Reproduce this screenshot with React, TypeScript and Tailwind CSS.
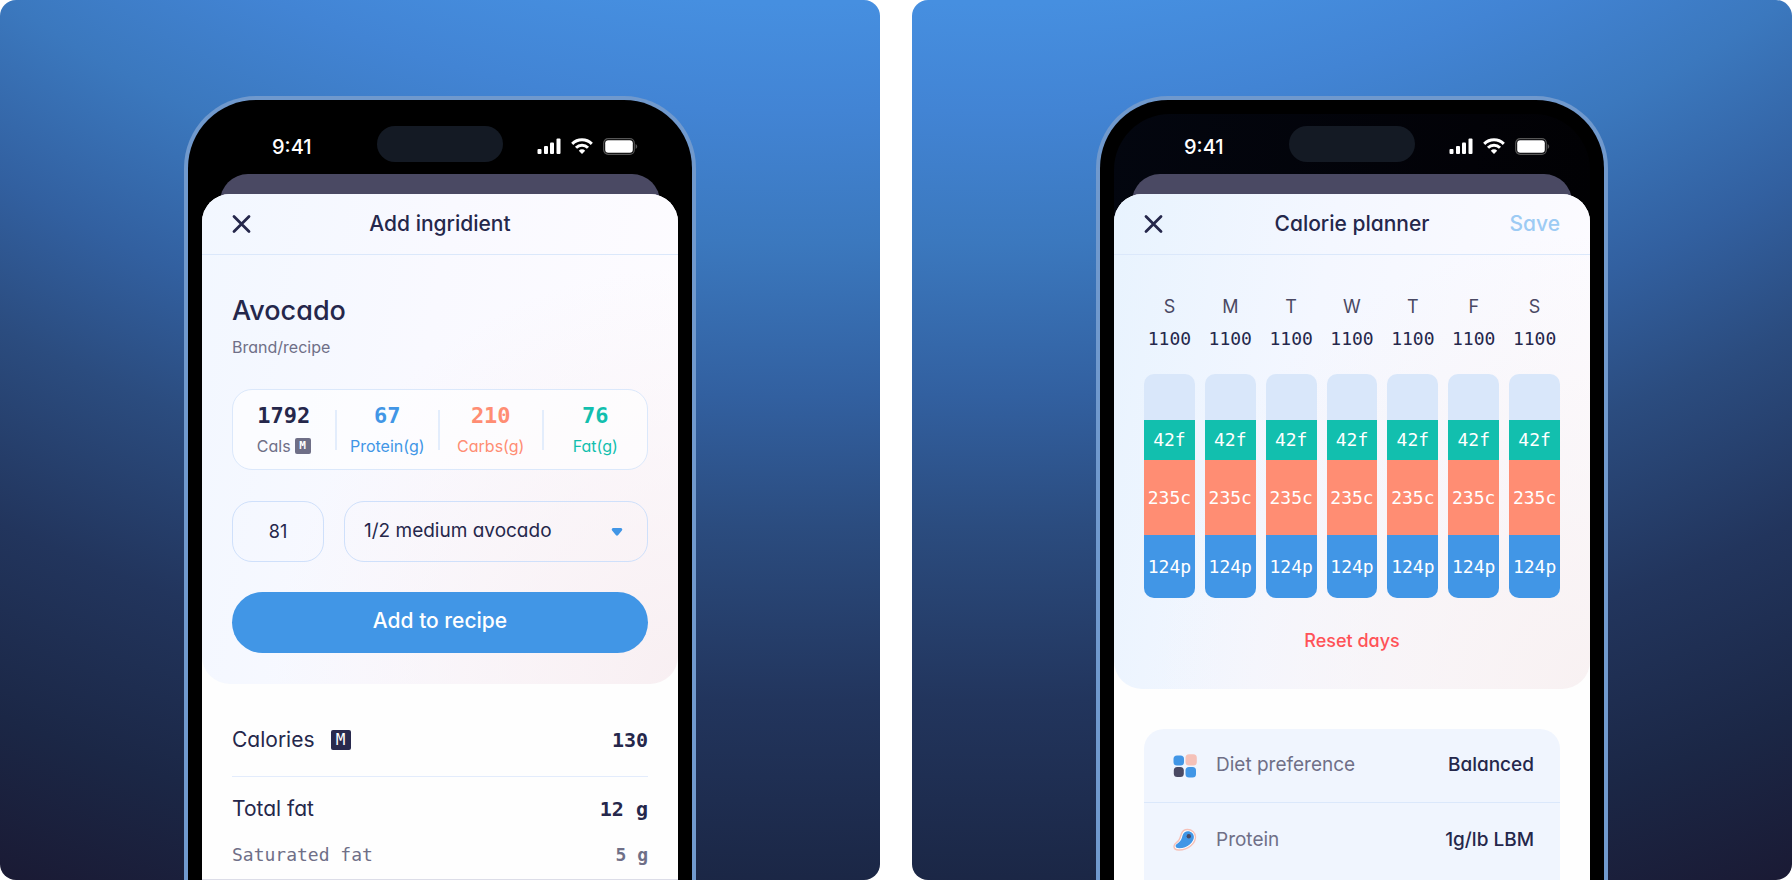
import { ReactNode, useState } from "react";
import clsx from "clsx";

const days = ["S", "M", "T", "W", "T", "F", "S"];

const macros = [
  { value: "1792", label: "Cals", color: "text-[#25274b]", labelColor: "text-[#6f6f87]", badge: true },
  { value: "67", label: "Protein(g)", color: "text-[#4196e6]", labelColor: "text-[#4196e6]" },
  { value: "210", label: "Carbs(g)", color: "text-[#ff8d73]", labelColor: "text-[#ff8d73]" },
  { value: "76", label: "Fat(g)", color: "text-[#12bfae]", labelColor: "text-[#12bfae]" },
];

export default function App() {
  return (
    <div className="grid h-screen grid-cols-2 gap-8 overflow-hidden bg-white font-['Inter',sans-serif] text-[#25274b] [font-feature-settings:'cv11']">
      <section className="flex justify-center overflow-hidden rounded-2xl bg-[radial-gradient(circle_farthest-corner_at_90%_-131%,#468fe0_53%,#4284d4_58%,#3b78be_64%,#3260a0_71%,#2b4c7f_77%,#22355d_85%,#1b2746_93%,#1a1a34_100%)] pt-24">
        <Phone>
          <IngredientSheet />
        </Phone>
      </section>
      <section className="flex justify-center overflow-hidden rounded-2xl bg-[radial-gradient(circle_farthest-corner_at_10%_-131%,#468fe0_53%,#4284d4_58%,#3b78be_64%,#3260a0_71%,#2b4c7f_77%,#22355d_85%,#1b2746_93%,#1a1a34_100%)] pt-24">
        <Phone tinted>
          <PlannerSheet />
        </Phone>
      </section>
    </div>
  );
}

function Phone({ children, tinted }: { children: ReactNode; tinted?: boolean }) {
  return (
    <div className="flex w-full max-w-[512px] flex-col rounded-t-[72px] border-4 border-b-0 border-[#7099cd] bg-black px-[14px] pt-[14px]">
      <div
        className={clsx(
          "flex flex-1 flex-col rounded-t-[56px]",
          tinted && "bg-[linear-gradient(100deg,#03060f_0%,#020207_60%,#000_100%)]"
        )}
      >
        <StatusBar />
        {/* sheet underneath, mostly covered */}
        <div className="mx-[18px] mt-3 -mb-3 h-8 shrink-0 rounded-t-[28px] bg-[#4a4963]" />
        {children}
      </div>
    </div>
  );
}

function StatusBar() {
  return (
    <div className="grid h-12 shrink-0 grid-cols-[1fr_126px_1fr] items-end">
      <span className="pb-[3px] pl-[70px] text-xl leading-6 font-medium text-white">
        9:41
      </span>
      <div className="h-9 rounded-full bg-[#141a24]" />
      <div className="flex items-center gap-[10px] pb-[7px] pl-[34px]">
        <svg width="24" height="17" viewBox="0 0 24 17" fill="#fff" aria-hidden="true">
          <rect x="0.5" y="11" width="4" height="5" rx="1" />
          <rect x="7" y="8" width="4" height="8" rx="1" />
          <rect x="13" y="4.5" width="4" height="11.5" rx="1" />
          <rect x="19.5" y="0.5" width="4" height="15.5" rx="1" />
        </svg>
        <svg width="22" height="17" viewBox="0 0 22 17" fill="none" stroke="#fff" strokeWidth="3" aria-hidden="true">
          <path d="M1.200 5.900a13.900 13.900 0 0 1 19.600 0" />
          <path d="M5 9.700a8.500 8.500 0 0 1 12 0" />
          <path d="M11 16l-3.200-3.300a4.500 4.500 0 0 1 6.400 0z" fill="#fff" stroke="none" />
        </svg>
        <svg width="35" height="17" viewBox="0 0 35 17" fill="none" aria-hidden="true">
          <rect x="0.700" y="0.700" width="30.600" height="15.600" rx="4.500" stroke="#555" strokeWidth="1.200" />
          <rect x="2.200" y="2.200" width="27.600" height="12.600" rx="3" fill="#fff" />
          <path d="M32.600 6v5c1-.4 1.600-1.400 1.600-2.500S33.600 6.400 32.600 6z" fill="#555" />
        </svg>
      </div>
    </div>
  );
}

function SheetHeader({ title, action }: { title: string; action?: string }) {
  return (
    <header className="grid h-[61px] grid-cols-[1fr_auto_1fr] items-center border-b border-[#dbe8fb] px-[30px]">
      <button aria-label="Close" className="cursor-pointer justify-self-start">
        <svg width="20" height="20" viewBox="0 0 20 20" stroke="#25274b" strokeWidth="2.800" strokeLinecap="round">
          <path d="M2 2.500l15 15M17 2.500l-15 15" />
        </svg>
      </button>
      <h1 className="text-[21px] font-medium">{title}</h1>
      {action && (
        <button className="cursor-pointer justify-self-end text-[21px] font-medium text-[#9dcbf4]">
          {action}
        </button>
      )}
    </header>
  );
}

function IngredientSheet() {
  const [amount, setAmount] = useState("81");

  return (
    <main className="flex-1 overflow-hidden rounded-t-[28px] bg-[#fefefe]">
      <div className="rounded-b-[28px] bg-[radial-gradient(ellipse_at_100%_100%,#f8eff2_0%,#f8eff200_60%),linear-gradient(100deg,#f2f7ff_0%,#f9f9ff_45%,#fefcff_100%)]">
        <SheetHeader title="Add ingridient" />

        <div className="px-[30px] pt-10 pb-[31px]">
          <h2 className="text-[27px] leading-8 font-medium">Avocado</h2>
          <p className="mt-2 text-base leading-6 text-[#6f6f87]">Brand/recipe</p>

          {/* MACROS */}
          <div className="mt-[30px] grid h-[81px] grid-cols-4 items-center divide-x-2 divide-[#e3edfc] rounded-[20px] border border-[#dbe8fb] bg-white/60">
            {macros.map((macro) => (
              <div key={macro.label} className="flex h-10 flex-col items-center justify-center">
                <span
                  className={clsx(
                    "pt-1 font-['DejaVu_Sans_Mono',monospace] text-[22px] leading-7 font-bold",
                    macro.color
                  )}
                >
                  {macro.value}
                </span>
                <span className={clsx("flex items-center gap-1 text-base leading-8", macro.labelColor)}>
                  {macro.label}
                  {macro.badge && (
                    <span className="flex size-4 items-center justify-center rounded-xs bg-[#6f6f87] font-['DejaVu_Sans_Mono',monospace] text-[11px] font-bold text-white">
                      M
                    </span>
                  )}
                </span>
              </div>
            ))}
          </div>

          {/* AMOUNT */}
          <div className="mt-[31px] flex gap-5">
            <input
              aria-label="Amount"
              value={amount}
              onChange={(e) => setAmount(e.target.value)}
              className="h-[61px] w-[92px] rounded-[20px] border border-[#cfe0fb] bg-transparent text-center text-lg outline-none"
            />
            <div className="relative flex-1">
              <select
                aria-label="Serving"
                className="h-[61px] w-full appearance-none rounded-[20px] border border-[#cfe0fb] bg-transparent px-[19px] text-[19px] outline-none"
              >
                <option>1/2 medium avocado</option>
                <option>1 medium avocado</option>
              </select>
              <svg
                width="12"
                height="10"
                viewBox="0 0 12 10"
                fill="#4196e6"
                aria-hidden="true"
                className="pointer-events-none absolute top-1/2 right-[25px] -translate-y-1/2"
              >
                <path d="M2.200 1h7.600a1.500 1.500 0 0 1 1.100 2.500L7.200 8a1.600 1.600 0 0 1-2.400 0L1.100 3.500A1.500 1.500 0 0 1 2.200 1z" />
              </svg>
            </div>
          </div>

          <button className="mt-[30px] h-[61px] w-full cursor-pointer rounded-full bg-[#4196e6] pb-1 text-[21px] font-medium text-white">
            Add to recipe
          </button>
        </div>
      </div>

      {/* NUTRITION */}
      <dl className="px-[30px] pt-10 text-[21px] leading-8">
        <div className="flex items-center justify-between border-b border-[#e3ecfc] pb-5">
          <dt className="flex items-center gap-4">
            Calories
            <span className="flex size-5 items-center justify-center rounded-xs bg-[#292a4e] font-['DejaVu_Sans_Mono',monospace] text-base text-white">
              M
            </span>
          </dt>
          <dd className="font-['DejaVu_Sans_Mono',monospace] text-xl leading-8 font-bold">130</dd>
        </div>
        <div className="flex items-center justify-between pt-4">
          <dt>Total fat</dt>
          <dd className="font-['DejaVu_Sans_Mono',monospace] text-xl leading-8 font-bold">12 g</dd>
        </div>
        <div className="flex items-center justify-between pt-[14px] font-['DejaVu_Sans_Mono',monospace] text-lg leading-8 text-[#6f6f87]">
          <dt>Saturated fat</dt>
          <dd className="font-bold">5 g</dd>
        </div>
      </dl>
      <hr className="mt-2 border-[#dcdde8]" />
    </main>
  );
}

function PlannerSheet() {
  return (
    <main className="flex flex-1 flex-col overflow-hidden rounded-t-[28px] bg-[#fefefe]">
      <div className="rounded-b-[28px] bg-[radial-gradient(ellipse_at_100%_100%,#f8f1f2_0%,#f8f1f200_65%),linear-gradient(100deg,#e8f3fe_0%,#f4f7ff_40%,#fefcff_100%)]">
        <SheetHeader title="Calorie planner" action="Save" />

        <div className="px-[30px] pt-10 pb-8">
          <ul className="grid grid-cols-7 gap-[10px] text-center">
            {days.map((day, index) => (
              <li key={index}>
                <div className="text-lg leading-6 text-[#4a4963]">{day}</div>
                <div className="mt-2 font-['DejaVu_Sans_Mono',monospace] text-lg leading-6">
                  1100
                </div>
                <div className="mt-[23px] overflow-hidden rounded-[10px] bg-[#d9e7fa] pt-[46px] font-['DejaVu_Sans_Mono',monospace] text-lg text-white">
                  <div className="bg-[#12bfae] leading-10">42f</div>
                  <div className="bg-[#ff8d73] leading-[75px]">235c</div>
                  <div className="bg-[#4196e6] leading-[63px]">124p</div>
                </div>
              </li>
            ))}
          </ul>
          <div className="mt-[27px] text-center">
            <button className="cursor-pointer text-lg leading-8 font-medium text-[#ff5257]">
              Reset days
            </button>
          </div>
        </div>
      </div>

      {/* PREFERENCES */}
      <ul className="mx-[30px] mt-10 flex-1 divide-y divide-[#dbe8fb] rounded-t-[20px] bg-[#f0f5fe]">
        <PreferenceRow icon={<DietIcon />} label="Diet preference" value="Balanced" />
        <PreferenceRow icon={<ProteinIcon />} label="Protein" value="1g/lb LBM" />
      </ul>
    </main>
  );
}

function PreferenceRow({
  icon,
  label,
  value,
}: {
  icon: ReactNode;
  label: string;
  value: string;
}) {
  return (
    <li className="flex h-[74px] items-center pr-[26px] pl-[29px] text-[19px]">
      {icon}
      <span className="ml-[19px] text-[#6f6f87]">{label}</span>
      <span className="ml-auto font-medium">{value}</span>
    </li>
  );
}

function DietIcon() {
  return (
    <svg width="24" height="24" viewBox="0 0 24 24" aria-hidden="true">
      <rect x="0.500" y="1.500" width="10.500" height="10" rx="3.500" fill="#4196e6" />
      <rect x="12.500" y="0.300" width="11.300" height="11.200" rx="3.500" fill="#f5c1b8" />
      <rect x="0.800" y="13" width="10" height="10" rx="3.500" fill="#4a4963" />
      <rect x="12.500" y="13" width="10.500" height="10.500" rx="3.500" fill="#4196e6" />
    </svg>
  );
}

function ProteinIcon() {
  return (
    <svg width="24" height="24" viewBox="0 0 24 24" aria-hidden="true">
      <path
        d="M14.500 1.500c4.500 0 8 3.200 8 7.500 0 6-7 13-16.500 13-3 0-5-1.300-5-3.800 0-2.800 3-3.400 4.700-5.700C7.300 10.300 7.500 8.200 8.200 6.300c.9-2.800 3.300-4.800 6.300-4.800z"
        fill="#fff"
        stroke="#f5c1b8"
        strokeWidth="1.400"
      />
      <path
        d="M14.800 3.200c3.500 0 6.100 2.500 6.100 5.800 0 5-6.200 11.300-14.600 11.300-2.300 0-3.700-.7-3.700-2.200 0-2 2.700-2.500 4.600-5 1.700-2.200 1.800-4.200 2.500-6.200.8-2.300 2.800-3.700 5.100-3.700z"
        fill="#4196e6"
      />
      <circle cx="15.800" cy="8.200" r="2.200" fill="#4a4963" />
    </svg>
  );
}
